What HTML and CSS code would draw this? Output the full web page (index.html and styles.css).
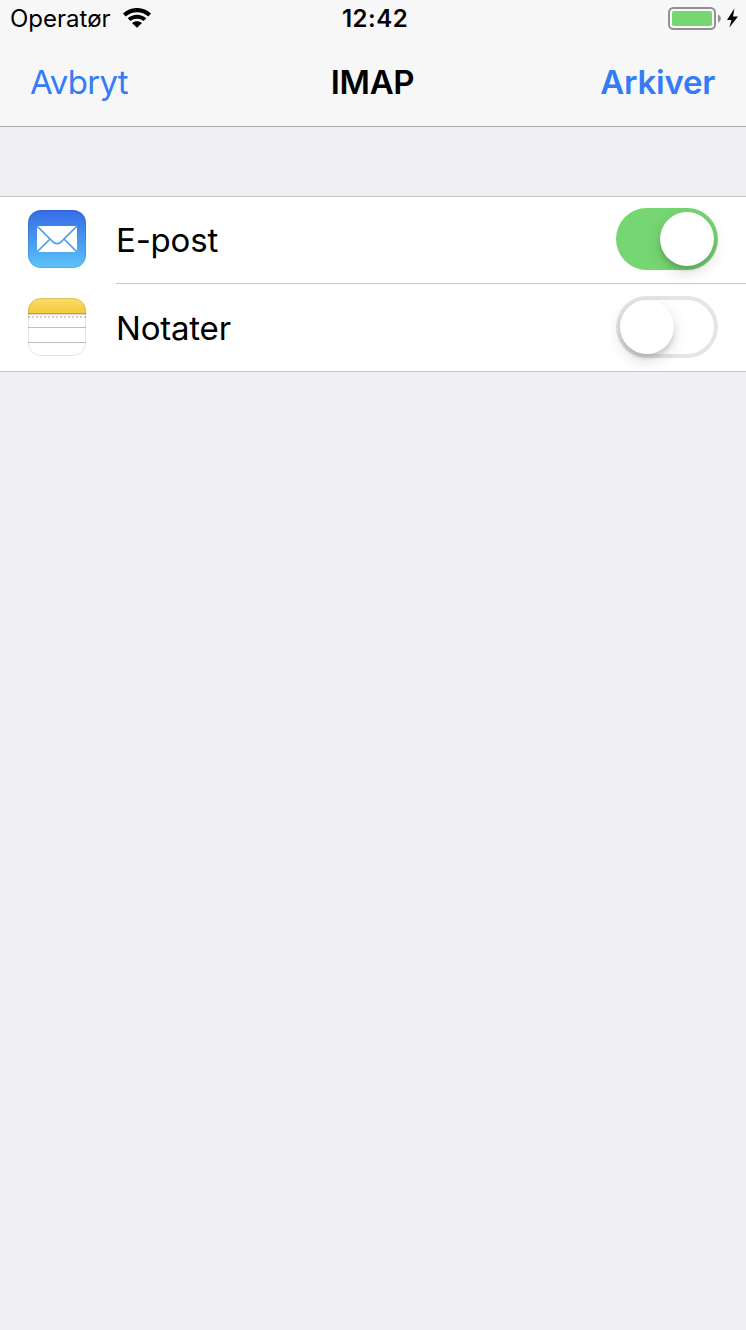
FILE: index.html
```html
<!DOCTYPE html>
<html lang="nb">
<head>
  <meta charset="UTF-8">
  <meta name="viewport" content="width=device-width, initial-scale=1.0">
  <title>IMAP</title>
  <link rel="stylesheet" href="styles.css">
</head>
<body>
  <header class="header">
    <!-- Status bar -->
    <div class="status">
      <div class="carrier">
        <span class="carrier-name">Operatør</span>
        <svg class="wifi" width="28" height="20" viewBox="0 0 28 20">
          <path d="M0 5.6C7.8-1.9 20.2-1.9 28 5.6L25.3 8.5C19 2.7 9 2.7 2.7 8.5Z"/>
          <path d="M4.7 10.3C9.9 5.4 18.1 5.4 23.3 10.3L20.5 13.1C16.9 9.9 11.1 9.9 7.5 13.1Z"/>
          <path d="M9 14.9C11.8 12.6 16.2 12.6 19 14.9L14 19.8Z"/>
        </svg>
      </div>
      <span class="time">12:42</span>
      <svg class="battery" width="72" height="24" viewBox="0 0 72 24">
        <rect x="1" y="1" width="46" height="21" rx="4.5" fill="none" stroke="#929294" stroke-width="2"/>
        <rect x="4" y="4" width="40" height="15" rx="1.8" fill="#76d672"/>
        <path d="M50 7.5C53.8 9 53.8 14 50 15.5Z" fill="#929294"/>
        <path d="M66.5 1.3L59 13H63.5L61.3 20.5L70 9.5H65Z" fill="#000"/>
      </svg>
    </div>

    <!-- Navigation bar -->
    <nav class="nav">
      <a class="cancel">Avbryt</a>
      <h1 class="title">IMAP</h1>
      <a class="save">Arkiver</a>
    </nav>
  </header>

  <!-- Account services -->
  <main class="list">
    <div class="row">
      <svg class="icon" width="58" height="58" viewBox="0 0 58 58">
        <defs>
          <linearGradient id="mailBg" x1="0" y1="0" x2="0" y2="1">
            <stop offset="0" stop-color="#366ce8"/>
            <stop offset="0.5" stop-color="#4696ef"/>
            <stop offset="1" stop-color="#5cc5f7"/>
          </linearGradient>
        </defs>
        <rect width="58" height="58" rx="13" fill="url(#mailBg)"/>
        <rect x="0.5" y="0.5" width="57" height="57" rx="12.5" fill="none" stroke="#000" stroke-opacity="0.1"/>
        <rect x="9" y="16" width="40" height="26" fill="#fff"/>
        <path d="M9 16L23.5 30.5Q29 37 34.5 30.5L49 16M9 42L21.5 29.5M49 42L36.5 29.5" fill="none" stroke="#4a9bf0" stroke-width="1.7"/>
      </svg>
      <div class="content">
        <span class="label">E-post</span>
        <span class="toggle on"><span class="knob"></span></span>
      </div>
    </div>
    <div class="row">
      <svg class="icon" width="58" height="58" viewBox="0 0 58 58">
        <defs>
          <linearGradient id="notesTop" x1="0" y1="0" x2="0" y2="1">
            <stop offset="0" stop-color="#f9dc6b"/>
            <stop offset="1" stop-color="#f5cb3b"/>
          </linearGradient>
          <clipPath id="notesShape"><rect width="58" height="58" rx="13"/></clipPath>
        </defs>
        <g clip-path="url(#notesShape)">
          <rect width="58" height="58" fill="#fff"/>
          <rect width="58" height="15" fill="url(#notesTop)"/>
          <rect y="15" width="58" height="1" fill="#a69c90"/>
          <rect y="16" width="58" height="1" fill="#dcdcde"/>
          <path d="M0 19H58" stroke="#d0d0d0" stroke-width="2" stroke-dasharray="2 2"/>
          <path d="M0 29.5H58M0 44.5H58" stroke="#bfbfc2"/>
        </g>
        <rect x="0.5" y="0.5" width="57" height="57" rx="12.5" fill="none" stroke="#000" stroke-opacity="0.1"/>
      </svg>
      <div class="content">
        <span class="label">Notater</span>
        <span class="toggle"><span class="knob"></span></span>
      </div>
    </div>
  </main>
</body>
</html>
```
FILE: styles.css
```css
* {
  box-sizing: border-box;
}
body {
  margin: 0;
  min-height: 100vh;
  background-color: #efeff4;
  color: #000;
  font-family: Inter, "Liberation Sans", sans-serif;
}
.header {
  height: 127px;
  background-color: #f7f7f8;
  border-bottom: 1px solid #a9a9ac;
}
/* Status bar */
.status {
  display: grid;
  grid-template-columns: 1fr auto 1fr;
  align-items: start;
  height: 40px;
  padding: 0 6px 0 10px;
}
.carrier {
  display: flex;
  gap: 12px;
}
.carrier-name {
  font-size: 24px;
  line-height: 38px;
}
.wifi {
  margin-top: 8px;
}
.time {
  font-size: 24px;
  font-weight: 600;
  line-height: 38px;
  letter-spacing: 0.5px;
}
.battery {
  justify-self: end;
  margin-top: 7px;
}
/* Navigation bar */
.nav {
  display: grid;
  grid-template-columns: 1fr auto 1fr;
  align-items: center;
  height: 84px;
  padding: 0 31px 0 30px;
  font-size: 33px;
  color: #347cf6;
}
.cancel {
  letter-spacing: -0.75px;
}
.title {
  margin: 0;
  font-size: 33px;
  font-weight: 600;
  letter-spacing: -0.3px;
  color: #000;
}
.save {
  justify-self: end;
  font-weight: 600;
  letter-spacing: -0.25px;
}
/* Table */
.list {
  margin-top: 69px;
  background-color: #fff;
  border-bottom: 1px solid #c8c7cc;
  box-shadow: inset 0 1px #c8c7cc;
}
.row {
  display: flex;
  height: 88px;
  padding-left: 28px;
}
.row:last-child {
  height: 87px;
}
.icon {
  margin: 14px 30px 0 0;
}
.content {
  flex: 1;
  display: flex;
  justify-content: space-between;
  padding: 12px 28px 0 0;
  border-bottom: 1px solid #c8c7cc;
}
.row:last-child .content {
  border-bottom: none;
}
.label {
  font-size: 33px;
  line-height: 65px;
  letter-spacing: -0.2px;
}
.toggle {
  display: flex;
  width: 102px;
  height: 62px;
  padding: 4px;
  border-radius: 31px;
  box-shadow: inset 0 0 0 4px #e5e5e5;
}
.toggle.on {
  justify-content: flex-end;
  background-color: #76d672;
  box-shadow: none;
}
.knob {
  width: 54px;
  height: 54px;
  border-radius: 50%;
  background-color: #fff;
  box-shadow: 0 6px 16px rgba(0, 0, 0, 0.14), 0 4px 4px rgba(0, 0, 0, 0.12);
}
```
